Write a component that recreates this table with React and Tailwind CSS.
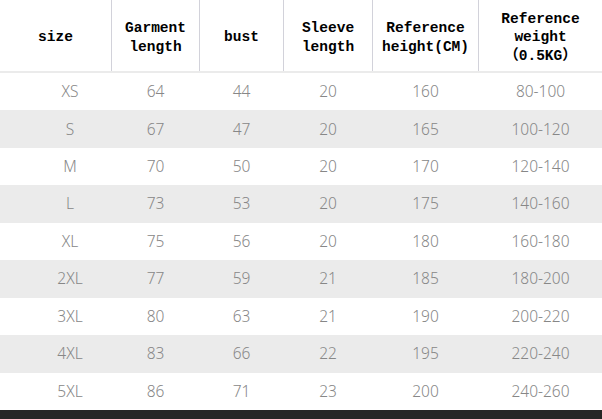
const COLS = [
  { w: 'w-[111px]', head: ['size'], pad: 'pl-[29px]' },
  { w: 'w-[88px]', head: ['Garment', 'length'], pad: '' },
  { w: 'w-[84px]', head: ['bust'], pad: '' },
  { w: 'w-[89px]', head: ['Sleeve', 'length'], pad: '' },
  { w: 'w-[106px]', head: ['Reference', 'height(CM)'], pad: '' },
  { w: 'flex-1', head: ['Reference', 'weight', '（0.5KG）'], pad: '' },
];

const ROWS = [
  ['XS', '64', '44', '20', '160', '80-100'],
  ['S', '67', '47', '20', '165', '100-120'],
  ['M', '70', '50', '20', '170', '120-140'],
  ['L', '73', '53', '20', '175', '140-160'],
  ['XL', '75', '56', '20', '180', '160-180'],
  ['2XL', '77', '59', '21', '185', '180-200'],
  ['3XL', '80', '63', '21', '190', '200-220'],
  ['4XL', '83', '66', '22', '195', '220-240'],
  ['5XL', '86', '71', '23', '200', '240-260'],
];

export default function App() {
  return (
    <div className="w-[602px] h-[419px] bg-white flex flex-col overflow-hidden">
      {/* header */}
      <div className="flex h-[73px] shrink-0 border-b-2 border-[#ebebeb]">
        {COLS.map((c, i) => (
          <div
            key={i}
            className={`${c.w} pt-[4px] flex flex-col items-center justify-center text-center text-[14.5px] leading-[18.5px] font-bold text-black ${i > 0 ? 'border-l border-[#d2d2da]' : ''}`}
            style={{ fontFamily: '"Liberation Mono", "Noto Sans CJK SC", monospace' }}
          >
            {c.head.map((t, j) => <span key={j}>{t}</span>)}
          </div>
        ))}
      </div>

      {/* body */}
      <div className="flex flex-col shrink-0">
        {ROWS.map((r, ri) => (
          <div key={ri} className={`flex h-[37.44px] ${ri % 2 ? 'bg-[#ebebeb]' : 'bg-white'}`}>
            {r.map((v, ci) => (
              <div
                key={ci}
                className={`${COLS[ci].w} ${COLS[ci].pad} flex items-center justify-center text-[15.5px] font-light text-[#878787] ${ci > 0 ? 'border-l border-transparent' : ''}`}
                style={{ fontFamily: '"Noto Sans", sans-serif' }}
              >
                {v}
              </div>
            ))}
          </div>
        ))}
      </div>

      <div className="flex-1 bg-[#262626]" />
    </div>
  );
}
